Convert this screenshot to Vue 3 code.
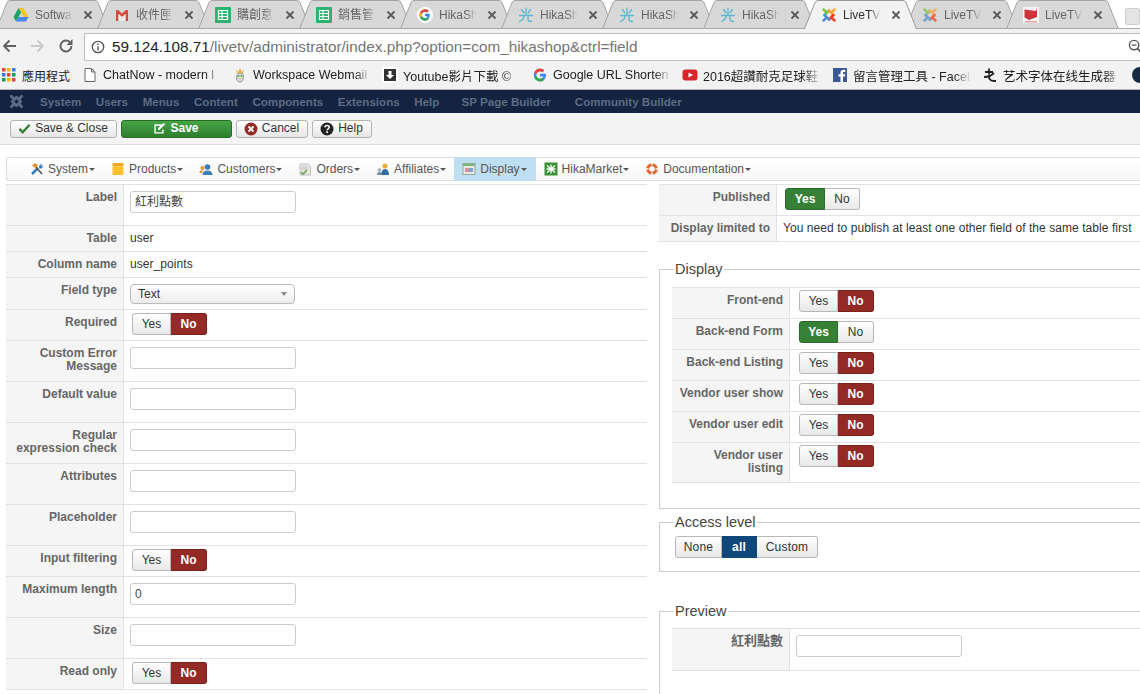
<script setup>
const tabs = [
  { t: 'Software', i: 'drive' }, { t: '收件匣', i: 'gmail' }, { t: '購創意-', i: 'sheet' }, { t: '銷售管理', i: 'sheet' },
  { t: 'HikaShop', i: 'g' }, { t: 'HikaShop', i: 'hika' }, { t: 'HikaShop', i: 'hika' }, { t: 'HikaShop', i: 'hika' },
  { t: 'LiveTV', i: 'joomla', active: true }, { t: 'LiveTV', i: 'joomla', dim: true }, { t: 'LiveTV', i: 'lf' }
]
const marks = [
  { t: 'ChatNow - modern l', i: 'page' }, { t: 'Workspace Webmail', i: 'ws' },
  { t: 'Youtube影片下載 ©', i: 'dl' }, { t: 'Google URL Shorten', i: 'g' },
  { t: '2016超讚耐克足球鞋', i: 'yt' }, { t: '留言管理工具 - Faceb', i: 'fb' }, { t: '艺术字体在线生成器', i: 'art' }
]
const nav = ['System', 'Users', 'Menus', 'Content', 'Components', 'Extensions', 'Help']
const menu = [
  { t: 'System', i: 'tools' }, { t: 'Products', i: 'box' }, { t: 'Customers', i: 'user' }, { t: 'Orders', i: 'order' },
  { t: 'Affiliates', i: 'aff' }, { t: 'Display', i: 'disp', active: true }, { t: 'HikaMarket', i: 'market' }, { t: 'Documentation', i: 'doc' }
]
const leftRows = [
  { l: ['Label'], k: 'input', v: '紅利點數', h: 41 },
  { l: ['Table'], k: 'text', v: 'user', h: 26 },
  { l: ['Column name'], k: 'text', v: 'user_points', h: 26 },
  { l: ['Field type'], k: 'select', v: 'Text', h: 32 },
  { l: ['Required'], k: 'no', h: 31 },
  { l: ['Custom Error', 'Message'], k: 'input', h: 41 },
  { l: ['Default value'], k: 'input', h: 41 },
  { l: ['Regular', 'expression check'], k: 'input', h: 41 },
  { l: ['Attributes'], k: 'input', h: 41 },
  { l: ['Placeholder'], k: 'input', h: 41 },
  { l: ['Input filtering'], k: 'no', h: 31 },
  { l: ['Maximum length'], k: 'input', v: '0', h: 41 },
  { l: ['Size'], k: 'input', h: 41 },
  { l: ['Read only'], k: 'no', h: 31 }
]
const displayRows = [
  { l: ['Front-end'], k: 'no', h: 31 }, { l: ['Back-end Form'], k: 'yes', h: 31 }, { l: ['Back-end Listing'], k: 'no', h: 31 },
  { l: ['Vendor user show'], k: 'no', h: 31 }, { l: ['Vendor user edit'], k: 'no', h: 31 }, { l: ['Vendor user', 'listing'], k: 'no', h: 40 }
]
</script>

<template>
  <div class="page">
    <div class="tabstrip">
      <div v-for="(tab, n) in tabs" :key="n" class="tab" :class="{ on: tab.active }">
        <svg class="tabshape" viewBox="0 0 113 29" width="113" height="29">
          <path d="M0.5 29 L11 2.5 Q12 0.5 14 0.5 H99 Q101 0.5 102 2.5 L112.5 29" />
        </svg>
        <svg class="favicon" :class="{ dim: tab.dim }" viewBox="0 0 16 16" width="16" height="16">
          <g v-if="tab.i === 'drive'">
            <path d="M5.5 1h5l5 9h-5z" fill="#f7c52b" /><path d="M5.5 1L8 5.5 3 14.5 0.5 10z" fill="#1ca261" /><path d="M5.5 10h10l-2.500 4.500H3z" fill="#4688f1" />
          </g>
          <g v-else-if="tab.i === 'gmail'">
            <path d="M2 3h2l4 3.500L12 3h2v11h-2.500V7L8 10 4.500 7v7H2z" fill="#d9493c" /><path d="M4.500 7L8 10l3.500-3v7h-7z" fill="#e9e9e9" />
          </g>
          <g v-else-if="tab.i === 'sheet'">
            <rect width="16" height="16" rx="1" fill="#2fb170" /><path d="M3.5 3.5h9v9h-9zM3.5 6.5h9M3.5 9.5h9M7 3.5v9" fill="none" stroke="#fff" stroke-width="1.2" />
          </g>
          <g v-else-if="tab.i === 'g'">
            <circle cx="8" cy="8" r="8" fill="#fff" /><path d="M12.8 6.7H8v2.500h2.700A3 3 0 0 1 8 11.200 3.200 3.200 0 0 1 8 4.800c.8 0 1.500.3 2 .8l1.800-1.800A5.600 5.600 0 0 0 8 2.400a5.600 5.600 0 1 0 0 11.200c3.300 0 5-2.700 4.800-6.900z" fill="#4285f4" /><path d="M3 5.400L5 7A3.200 3.200 0 0 1 8 4.800c.8 0 1.500.3 2 .8l1.800-1.800A5.600 5.600 0 0 0 3 5.400z" fill="#ea4335" /><path d="M3 10.600A5.600 5.600 0 0 0 11.700 12.200L9.800 10.700A3.200 3.200 0 0 1 5 9z" fill="#34a853" /><path d="M3 5.400a5.600 5.600 0 0 0 0 5.200L5 9a3.200 3.200 0 0 1 0-2z" fill="#fbbc05" />
          </g>
          <g v-else-if="tab.i === 'hika'" stroke="#5cb6cf" stroke-width="1.3" fill="none" stroke-linecap="round">
            <path d="M8 1v7M3.500 2.500L6 6M12.500 2.500L10 6M1.500 8.500h13M6 8.500c0 3-2 5-4.500 6M10 8.500v4c0 1.500 1 2 3.500 2" />
          </g>
          <g v-else-if="tab.i === 'joomla'" fill="none" stroke-width="2.500" stroke-linecap="round">
            <path d="M2.500 2.500l3.200 3.200M3.500 8L8 3.500" stroke="#7ac143" /><path d="M13.500 2.500l-3.200 3.200M8 3.500L12.500 8" stroke="#f9a541" /><path d="M13.500 13.500l-3.200-3.200M12.500 8L8 12.500" stroke="#f44321" /><path d="M2.500 13.500l3.200-3.200M8 12.500L3.500 8" stroke="#5091cd" />
          </g>
          <g v-else>
            <rect x="0" y="0" width="16" height="16" fill="#f4f4f4" /><path d="M1.500 2.500L13 4l1-3v9l-8 3-4.500-2.500z" fill="#c9353a" /><rect x="2" y="14" width="12" height="1.500" fill="#e7a3a5" />
          </g>
        </svg>
        <span class="tabtext">{{ tab.t }}</span>
        <svg class="tabx" viewBox="0 0 10 10" width="10" height="10"><path d="M1.500 1.500l7 7M8.500 1.500l-7 7" stroke="#5a5a5a" stroke-width="1.800" /></svg>
      </div>
      <div class="newtab"></div>
    </div>

    <div class="toolbar">
      <svg class="navicon" viewBox="0 0 16 16" width="16" height="16"><path d="M15 8H3M8.500 2.500L3 8l5.500 5.500" fill="none" stroke="#5f5f5f" stroke-width="1.800" /></svg>
      <svg class="navicon" viewBox="0 0 16 16" width="16" height="16"><path d="M1 8h12M7.500 2.500L13 8l-5.500 5.500" fill="none" stroke="#c9c9c9" stroke-width="1.800" /></svg>
      <svg class="navicon" viewBox="0 0 16 16" width="16" height="16"><path d="M13.500 8a5.500 5.500 0 1 1-1.600-3.900" fill="none" stroke="#5f5f5f" stroke-width="1.900" /><path d="M14.500 1v6H8.500z" fill="#5f5f5f" /></svg>
      <div class="omnibox">
        <svg viewBox="0 0 16 16" width="14" height="14"><circle cx="8" cy="8" r="6.500" fill="none" stroke="#555" stroke-width="1.500" /><path d="M8 7v5M8 4v1.600" stroke="#555" stroke-width="1.600" /></svg>
        <span class="url"><b>59.124.108.71</b>/livetv/administrator/index.php?option=com_hikashop&amp;ctrl=field</span>
        <svg class="zoomglass" viewBox="0 0 16 16" width="15" height="15"><circle cx="6.500" cy="6.500" r="5" fill="none" stroke="#555" stroke-width="1.500" /><path d="M4 6.500h5" stroke="#555" stroke-width="1.300" /><path d="M10 10l5 5" stroke="#555" stroke-width="2" /></svg>
      </div>
    </div>

    <div class="bookmarks">
      <div class="mark apps">
        <svg viewBox="0 0 14 14" width="14" height="14">
          <g v-for="(c, n) in ['#e8453c','#f4b400','#3b78e7','#3b78e7','#e8453c','#0f9d58','#0f9d58','#f4b400','#e8453c']" :key="n">
            <rect :x="(n % 3) * 5" :y="Math.floor(n / 3) * 5" width="3.500" height="3.500" :fill="c" />
          </g>
        </svg>
        <span>應用程式</span>
      </div>
      <div v-for="(m, n) in marks" :key="n" class="mark">
        <svg viewBox="0 0 16 16" width="16" height="16">
          <path v-if="m.i === 'page'" d="M3 1.500h6.500L13 5v9.500H3zM9.500 1.500V5H13" fill="#fff" stroke="#666" />
          <g v-else-if="m.i === 'ws'"><path d="M8 6c3 0 4 2 3.500 4.500S10 15 8 15s-4-2-3.500-4.500S5 6 8 6z" fill="#d9d9c8" stroke="#777" stroke-width=".7" /><path d="M4 2l2 3 2-4 2 4 2-3-1 4H5z" fill="#e9b44c" /><circle cx="6.500" cy="9" r="1" fill="#4a7" /><circle cx="9.500" cy="9" r="1" fill="#4a7" /></g>
          <g v-else-if="m.i === 'dl'"><rect x="0" y="0" width="16" height="16" fill="#fff" /><rect x="2" y="2" width="12" height="12" fill="#333" /><path d="M6.500 4h3v4h2.500L8 12 4 8h2.500z" fill="#fff" /></g>
          <g v-else-if="m.i === 'g'"><path d="M14 6.800H8v2.600h3.400A3.600 3.600 0 0 1 8 11.700 3.700 3.700 0 0 1 8 4.300c1 0 1.800.3 2.400.9l1.900-1.900A6.300 6.300 0 1 0 8 14.300c3.700 0 6.300-3 6-7.500z" fill="#4285f4" /><path d="M2.300 5.200L4.500 6.900A3.700 3.700 0 0 1 8 4.300c1 0 1.800.3 2.400.9l1.900-1.900A6.300 6.300 0 0 0 2.300 5.200z" fill="#ea4335" /><path d="M2.300 10.800A6.300 6.300 0 0 0 12.200 12.900L10 11.100A3.700 3.700 0 0 1 4.500 9.100z" fill="#34a853" /></g>
          <g v-else-if="m.i === 'yt'"><rect x="0.500" y="2.500" width="15" height="11" rx="3" fill="#d9252a" /><path d="M6.500 5.500L11 8l-4.500 2.500z" fill="#fff" /></g>
          <g v-else-if="m.i === 'fb'"><rect x="1" y="1" width="14" height="14" fill="#3b5998" /><path d="M11 15V9.500h2l.3-2.300H11V6c0-.7.2-1.100 1.100-1.100h1.200v-2c-.6-.1-1.200-.1-1.800-.1-1.800 0-3 1.100-3 3v1.400H6.500v2.300h2V15z" fill="#fff" /></g>
          <g v-else fill="none" stroke="#222" stroke-width="1.800"><path d="M3 5h8M7 1.500v6M2 10c4 0 8-2 10-4M7 8c0 3 0 6 5 6h2" /></g>
        </svg>
        <span class="fade">{{ m.t }}</span>
      </div>
      <svg class="lastmark" viewBox="0 0 16 16" width="16" height="16"><circle cx="8" cy="8" r="8" fill="#1a2b45" /><path d="M8 0a8 8 0 0 1 6 3L8 6z" fill="#e8a33d" /></svg>
    </div>

    <nav class="cms">
      <svg class="jlogo" viewBox="0 0 16 16" width="15" height="15"><g fill="none" stroke="#5d6c84" stroke-width="3" stroke-linecap="round"><path d="M2.500 2.500l3 3M3.500 8L8 3.500M13.500 2.500l-3 3M8 3.500L12.500 8M13.500 13.500l-3-3M12.500 8L8 12.500M2.500 13.500l3-3M8 12.500L3.500 8" /></g></svg>
      <span v-for="n in nav" :key="n" class="navitem">{{ n }}</span>
      <span class="navitem sp">SP Page Builder</span>
      <span class="navitem cb">Community Builder</span>
    </nav>

    <div class="actions">
      <button class="btn save-close"><svg viewBox="0 0 14 14" width="13" height="13"><path d="M1.500 7.500l3.500 3.500 7.500-8" fill="none" stroke="#378137" stroke-width="2.600" /></svg><span>Save &amp; Close</span></button>
      <button class="btn save"><svg viewBox="0 0 14 14" width="13" height="13"><path d="M1.500 2.500h8v1.500H3v7h7V8h1.500v4.500h-10z" fill="#fff" /><path d="M5.500 6.500L11.500 1l1.500 1.500-6 6H5.500z" fill="#fff" /></svg><span>Save</span></button>
      <button class="btn cancel"><svg viewBox="0 0 14 14" width="14" height="14"><circle cx="7" cy="7" r="6.500" fill="#942a25" /><path d="M4.500 4.500l5 5M9.500 4.500l-5 5" stroke="#fff" stroke-width="1.800" /></svg><span>Cancel</span></button>
      <button class="btn help"><svg viewBox="0 0 14 14" width="14" height="14"><circle cx="7" cy="7" r="6.500" fill="#222" /><path d="M4.800 5.400C5 4 6 3.400 7 3.400c1.400 0 2.300.8 2.300 1.900 0 1.500-2.200 1.500-2.200 3" fill="none" stroke="#fff" stroke-width="1.500" /><rect x="6.200" y="9.300" width="1.800" height="1.600" fill="#fff" /></svg><span>Help</span></button>
    </div>

    <div class="submenu">
      <div v-for="m in menu" :key="m.t" class="subitem" :class="{ on: m.active }">
        <svg viewBox="0 0 14 14" width="14" height="14">
          <g v-if="m.i === 'tools'"><path d="M2 12l6-6" stroke="#2f7fc0" stroke-width="2.500" /><path d="M12 12L5 4" stroke="#555" stroke-width="1.600" /><path d="M2 3.500L5 1l3 2.500L5.500 6z" fill="#e8912c" /><path d="M9 5a3 3 0 0 1 3.500-3L11 3.500l1 1L13 3a3 3 0 0 1-3.500 3.500z" fill="#2f7fc0" /></g>
          <g v-else-if="m.i === 'box'"><rect x="1.500" y="1" width="11" height="3.500" rx="1" fill="#f1a820" /><rect x="1.500" y="4.500" width="11" height="8.500" rx="1" fill="#fbc02d" /></g>
          <g v-else-if="m.i === 'user'"><circle cx="8.500" cy="5" r="2.800" fill="#3f7cb6" /><path d="M3.500 13c0-3 2-4.500 5-4.500s5 1.500 5 4.500z" fill="#3f7cb6" /><circle cx="3.500" cy="6" r="2" fill="#e7953b" /><path d="M0.500 11c0-2 1-3 3-3v3z" fill="#e7953b" /></g>
          <g v-else-if="m.i === 'order'"><path d="M2 2h8l2.500 2.500V13H2z" fill="#e9e9e4" stroke="#aaa" stroke-width=".7" /><path d="M3.500 5h6M3.500 7h6" stroke="#bbb" /><path d="M3 10l2 2 4-4" stroke="#6aa84f" stroke-width="1.600" fill="none" /></g>
          <g v-else-if="m.i === 'aff'"><circle cx="9" cy="4" r="2.500" fill="#e7a93b" /><path d="M5 13c0-3 1.500-6 4-6s4 3 4 6z" fill="#2f6fa8" /><circle cx="3.500" cy="8" r="1.800" fill="#9ab" /><path d="M1 13c0-2 1-3 2.500-3S6 11 6 13z" fill="#789" /></g>
          <g v-else-if="m.i === 'disp'"><rect x="1" y="1.500" width="12" height="11" fill="#e9e9e2" stroke="#8a9a8a" stroke-width=".8" /><rect x="1" y="1.500" width="12" height="2.500" fill="#7fb27d" /><rect x="3" y="6" width="4" height="4" fill="#e0909a" /><rect x="7" y="6" width="4" height="4" fill="#7aa7d6" /></g>
          <g v-else-if="m.i === 'market'"><rect x="0.500" y="0.500" width="13" height="13" fill="#3b8f35" /><path d="M7 2.500v9M3 3.500l8 7M11 3.500l-8 7M2.500 7h9" stroke="#fff" stroke-width="1.300" /></g>
          <g v-else><circle cx="7" cy="7" r="4.300" fill="none" stroke="#e2622b" stroke-width="3" /><path d="M7 0.500v3M7 10.500v3M0.500 7h3M10.500 7h3" stroke="#f5f5f5" stroke-width="1.500" /></g>
        </svg>
        <span>{{ m.t }}</span><i class="caret"></i>
      </div>
    </div>

    <main class="columns">
      <section class="leftcol">
        <div v-for="(r, n) in leftRows" :key="n" class="row" :style="{ height: r.h + 'px' }">
          <div class="label"><div v-for="x in r.l" :key="x">{{ x }}</div></div>
          <div class="value">
            <div v-if="r.k === 'input'" class="input">{{ r.v }}</div>
            <div v-else-if="r.k === 'text'" class="plain">{{ r.v }}</div>
            <div v-else-if="r.k === 'select'" class="select">{{ r.v }}<i></i></div>
            <div v-else class="toggle"><span class="yn">Yes</span><span class="yn red">No</span></div>
          </div>
        </div>
      </section>

      <section class="rightcol">
        <div class="published">
          <div class="row">
            <div class="label">Published</div>
            <div class="value"><div class="toggle"><span class="yn green">Yes</span><span class="yn">No</span></div></div>
          </div>
          <div class="row limited">
            <div class="label">Display limited to</div>
            <div class="value"><div class="plain">You need to publish at least one other field of the same table first</div></div>
          </div>
        </div>

        <fieldset class="fs display">
          <legend>Display</legend>
          <div class="boxed">
            <div v-for="(r, n) in displayRows" :key="n" class="row" :style="{ height: r.h + 'px' }">
              <div class="label"><div v-for="x in r.l" :key="x">{{ x }}</div></div>
              <div class="value">
                <div v-if="r.k === 'no'" class="toggle"><span class="yn">Yes</span><span class="yn red">No</span></div>
                <div v-else class="toggle"><span class="yn green">Yes</span><span class="yn">No</span></div>
              </div>
            </div>
          </div>
        </fieldset>

        <fieldset class="fs access">
          <legend>Access level</legend>
          <div class="toggle three"><span class="yn">None</span><span class="yn blue">all</span><span class="yn">Custom</span></div>
        </fieldset>

        <fieldset class="fs preview">
          <legend>Preview</legend>
          <div class="boxed">
            <div class="row prow">
              <div class="label">紅利點數</div>
              <div class="value"><div class="input"></div></div>
            </div>
          </div>
        </fieldset>
      </section>
    </main>
  </div>
</template>

<style>
html, body { margin: 0; background: #fff; overflow: hidden; }
</style>

<style scoped>
.page { width: 1140px; height: 694px; overflow: hidden; font: 12px "Liberation Sans", "Noto Sans CJK TC", sans-serif; color: #333; background: #fff; }
.tabstrip { display: flex; height: 29px; margin-left: -4px; background: #fff; position: relative; }
.tab { position: relative; flex: 0 0 113px; margin-right: -12px; height: 29px; color: #666; }
.tab.on { z-index: 2; color: #333; }
.tabshape { position: absolute; left: 0; top: 0; }
.tabshape path { fill: #d8d8d8; stroke: #a4a4a4; }
.tab.on .tabshape path { fill: #f2f2f2; stroke: #999; }
.favicon { position: absolute; left: 17px; top: 7px; }
.favicon.dim { opacity: .75; }
.tabtext { position: absolute; left: 39px; top: 7px; width: 38px; font: 12px/16px "Liberation Sans", "Noto Sans CJK TC", sans-serif; white-space: nowrap; overflow: hidden; -webkit-mask-image: linear-gradient(90deg, #000 70%, transparent); mask-image: linear-gradient(90deg, #000 70%, transparent); }
.tabx { position: absolute; left: 87px; top: 10px; }
.newtab { width: 28px; height: 15px; margin: 8px 0 0 18px; background: #e4e4e4; border: 1px solid #cfcfcf; border-radius: 2px; }
.toolbar { display: flex; align-items: center; height: 32px; background: #f2f2f2; padding-left: 1px; position: relative; z-index: 1; box-shadow: 0 -1px 0 #a8a8a8; }
.navicon { margin: 2px 0 0; flex: none; }
.navicon + .navicon { margin-left: 13px; }
.navicon + .navicon + .navicon { margin-left: 12px; }
.omnibox { flex: 1; align-self: stretch; margin: 4px 0 0 10px; background: #fff; border: 1px solid #bdbdbd; border-right: 0; border-radius: 2px 0 0 2px; display: flex; align-items: center; padding-left: 6px; position: relative; }
.url { margin-left: 7px; font-size: 15.3px; color: #757575; white-space: nowrap; }
.url b { font-weight: 400; color: #222; }
.zoomglass { position: absolute; left: 1043px; top: 5px; }
.bookmarks { display: flex; align-items: center; height: 29px; background: #f2f2f2; border-bottom: 1px solid #b5b5b5; position: relative; padding-left: 2px; box-sizing: border-box; font-size: 12.5px; color: #222; }
.mark { display: flex; align-items: center; gap: 5px; width: 150px; white-space: nowrap; flex: none; }
.apps { width: 80px; gap: 6px; font-size: 12px; }
.fade { display: block; width: 118px; overflow: hidden; -webkit-mask-image: linear-gradient(90deg, #000 86%, transparent 100%); mask-image: linear-gradient(90deg, #000 86%, transparent 100%); }
.lastmark { position: absolute; left: 1132px; top: 6px; }
.cms { display: flex; align-items: center; height: 23px; box-sizing: border-box; padding: 0 0 1px 9px; background: #132340; color: #5d6c84; font-weight: 700; font-size: 11.6px; white-space: nowrap; }
.jlogo { margin-right: 16px; }
.navitem { margin-right: 14.6px; }
.sp { margin-left: 7.5px; margin-right: 0; }
.cb { margin-left: 24px; }
.actions { display: flex; align-items: center; gap: 4px; height: 32px; box-sizing: border-box; padding-left: 10px; background: #f4f4f4; border-bottom: 1px solid #dcdcdc; }
.btn { display: flex; align-items: center; justify-content: center; gap: 5px; height: 18px; padding: 0; box-sizing: border-box; font: 12px "Liberation Sans", sans-serif; color: #333; border: 1px solid #b3b3b3; border-radius: 3px; background: linear-gradient(#fff, #e6e6e6); }
.btn span { position: relative; top: -1px; left: -1px; }
.save-close { width: 107px; }
.save { width: 111px; color: #fff; font-weight: 700; background: linear-gradient(#46a546, #2f7d2f); border-color: #256a25; }
.cancel { width: 72px; }
.help { width: 60px; }
.submenu { display: flex; align-items: center; height: 24px; box-sizing: border-box; margin: 12px 0 0 6px; padding-left: 15px; border: 1px solid #dedede; border-right: 0; border-radius: 3px 0 0 3px; background: linear-gradient(#fff, #f7f7f7); color: #555; }
.subitem { display: flex; align-items: center; height: 24px; padding: 0 8px; gap: 4px; }
.subitem.on { background: #bedff2; padding-right: 9px; }
.caret { display: block; width: 0; height: 0; margin-left: -3px; border: 3px solid transparent; border-top-color: #555; border-bottom: 0; }
.columns { display: flex; margin-top: 3px; }
.leftcol { width: 641px; margin-left: 6px; border-top: 1px solid #e2e2e2; }
.rightcol { flex: 1; margin-left: 12px; }
.row { display: flex; box-sizing: border-box; border-bottom: 1px solid #e2e2e2; }
.label { width: 118px; box-sizing: border-box; flex: none; padding: 6px 6px 0 0; background: #f5f5f5; border-right: 1px solid #e2e2e2; text-align: right; font-weight: 700; color: #666; line-height: 13px; }
.value { flex: 1; padding-left: 6px; display: flex; align-items: flex-start; }
.input { width: 166px; height: 22px; box-sizing: border-box; margin-top: 6px; padding: 0 4px; line-height: 20px; background: #fff; border: 1px solid #ccc; border-radius: 3px; color: #444; }
.plain { margin-top: 6px; line-height: 13px; letter-spacing: .06px; }
.select { width: 165px; height: 20px; box-sizing: border-box; margin-top: 6px; padding-left: 7px; line-height: 18px; border: 1px solid #bbb; border-radius: 4px; background: linear-gradient(#fff, #ececec); position: relative; }
.select i { position: absolute; right: 7px; top: 7px; border: 3px solid transparent; border-top: 4px solid #888; border-bottom: 0; }
.toggle { display: flex; margin: 3px 0 0 2px; height: 22px; }
.yn { display: flex; align-items: center; justify-content: center; width: 36px; box-sizing: border-box; border: 1px solid #b8b8b8; border-left-width: 0; background: linear-gradient(#fff, #e8e8e8); color: #333; }
.yn:first-child { width: 39px; border-left-width: 1px; border-radius: 3px 0 0 3px; }
.yn:last-child { border-radius: 0 3px 3px 0; }
.red { background: #942a25; border-color: #7b1f1b; color: #fff; font-weight: 700; }
.green { background: #378137; border-color: #2b6a2b; color: #fff; font-weight: 700; }
.blue { background: #10487c; border-color: #10487c; color: #fff; font-weight: 700; width: 35px; }
.published { border-top: 1px solid #e2e2e2; }
.published .row { height: 31px; }
.published .row.limited { height: 26px; }
.published .yn:first-child { width: 40px; }
.published .yn:last-child { width: 35px; }
.fs { border: 1px solid #ccc; border-right: 0; margin: 0; padding: 0 0 0 12px; min-width: 0; box-sizing: border-box; }
.fs legend { font-size: 14.5px; line-height: 17px; padding: 0 1px; margin-left: 2px; color: #444; }
.boxed { border-top: 1px solid #e2e2e2; }
.display { margin-top: 19px; height: 248px; }
.display .boxed { margin-top: 9px; }
.display .toggle { margin: 2px 0 0 3px; }
.access { margin-top: 5px; height: 58px; padding-left: 15px; }
.access legend { margin-left: -1px; }
.access .toggle { margin: 5px 0 0 0; }
.three .yn { letter-spacing: .2px; }
.three .yn:first-child { width: 47px; }
.three .yn:last-child { width: 61px; }
.preview { margin-top: 31px; height: 100px; }
.preview .boxed { margin-top: 8px; }
.prow { height: 42px; }
.prow .label { font-size: 13px; padding-top: 5px; }
</style>
